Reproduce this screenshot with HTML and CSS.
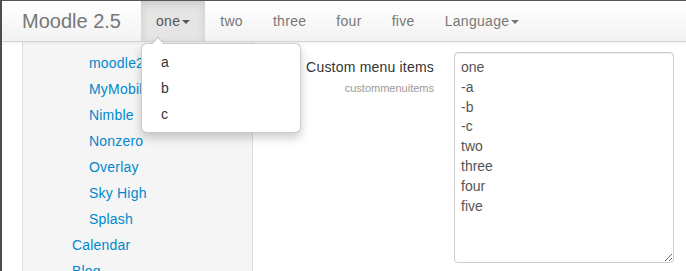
FILE: index.html
```html
<!DOCTYPE html>
<html lang="en">

<head>
  <meta charset="UTF-8" />
  <meta name="viewport" content="width=device-width, initial-scale=1.0" />
  <title>Moodle 2.5 - Custom menu items</title>
  <link rel="stylesheet" href="styles.css">
</head>

<body>
  <!-- Barra de navegación con el menú personalizado -->
  <header class="navbar">
    <a class="brand" href="#">Moodle 2.5</a>
    <ul class="nav">
      <li class="dropdown open">
        <a href="#">one<b class="caret"></b></a>
        <ul class="dropdown-menu">
          <li><a href="#">a</a></li>
          <li><a href="#">b</a></li>
          <li><a href="#">c</a></li>
        </ul>
      </li>
      <li><a href="#">two</a></li>
      <li><a href="#">three</a></li>
      <li><a href="#">four</a></li>
      <li><a href="#">five</a></li>
      <li class="dropdown"><a href="#">Language<b class="caret"></b></a></li>
    </ul>
  </header>

  <div class="page">
    <!-- Árbol de administración -->
    <aside class="sidebar">
      <ul class="tree">
        <li class="sub"><a href="#">moodle2</a></li>
        <li class="sub"><a href="#">MyMobile</a></li>
        <li class="sub"><a href="#">Nimble</a></li>
        <li class="sub"><a href="#">Nonzero</a></li>
        <li class="sub"><a href="#">Overlay</a></li>
        <li class="sub"><a href="#">Sky High</a></li>
        <li class="sub"><a href="#">Splash</a></li>
        <li><a href="#">Calendar</a></li>
        <li><a href="#">Blog</a></li>
      </ul>
    </aside>

    <main class="content">
      <div class="control-group">
        <label class="control-label" for="custommenuitems">
          Custom menu items
          <span class="setting-name">custommenuitems</span>
        </label>
        <textarea id="custommenuitems" class="setting-input">one
-a
-b
-c
two
three
four
five</textarea>
      </div>
    </main>
  </div>
</body>

</html>
```

FILE: styles.css
```css
html,
body {
  height: 100%;
}

body {
  font-family: "Liberation Sans", Arial, sans-serif;
  font-size: 14px;
  line-height: 20px;
  color: #333;
  background: #fff;
  margin: 0;
  border-top: 1px solid #555;
  border-left: 2px solid #4d4d4d;
  box-sizing: border-box;
  overflow: hidden;
}

a {
  text-decoration: none;
}

ul {
  list-style: none;
  margin: 0;
  padding: 0;
}

.navbar {
  position: relative;
  z-index: 10;
  display: flex;
  height: 40px;
  padding-left: 20px;
  background: linear-gradient(#ffffff, #f2f2f2);
  border-bottom: 1px solid #d4d4d4;
  box-shadow: 0 1px 4px rgba(0, 0, 0, 0.065);
}

.brand {
  display: block;
  padding: 10px 20px 10px 0;
  font-size: 20px;
  line-height: 20px;
  color: #777;
}

.nav {
  display: flex;
}

.nav > li {
  position: relative;
}

.nav > li > a {
  display: block;
  padding: 10px 15px;
  color: #777;
  letter-spacing: 0.3px;
}

.nav > li.open > a {
  background: #e5e5e5;
  color: #555;
  box-shadow: inset 0 3px 8px rgba(0, 0, 0, 0.125);
}

.caret {
  display: inline-block;
  width: 0;
  height: 0;
  margin-left: 2px;
  vertical-align: middle;
  border-top: 4px solid #777;
  border-left: 4px solid transparent;
  border-right: 4px solid transparent;
}

.open .caret {
  border-top-color: #555;
}

.dropdown-menu {
  display: none;
  position: absolute;
  top: 100%;
  left: 0;
  margin-top: 2px;
  width: 160px;
  box-sizing: border-box;
  padding: 5px 0;
  background: #fff;
  border: 1px solid rgba(0, 0, 0, 0.2);
  border-radius: 6px;
  box-shadow: 0 5px 10px rgba(0, 0, 0, 0.2);
  letter-spacing: 0;
}

.open .dropdown-menu {
  display: block;
}

.dropdown-menu:before,
.dropdown-menu:after {
  content: "";
  position: absolute;
  border-left: 7px solid transparent;
  border-right: 7px solid transparent;
  border-bottom: 7px solid rgba(0, 0, 0, 0.2);
  top: -7px;
  left: 9px;
}

.dropdown-menu:after {
  border-left-width: 6px;
  border-right-width: 6px;
  border-bottom: 6px solid #fff;
  top: -6px;
  left: 10px;
}

.dropdown-menu a {
  display: block;
  padding: 3px 19px;
  color: #333;
}

.page {
  display: flex;
  height: 100%;
  margin-left: 20px;
}

.sidebar {
  width: 229px;
  background: #f5f5f5;
  border-left: 1px solid #ddd;
  border-right: 1px solid #ddd;
}

.tree {
  padding: 8px 0 0 49px;
}

.tree li {
  line-height: 26px;
}

.tree li.sub {
  padding-left: 17px;
}

.tree a {
  color: #0088cc;
  letter-spacing: 0.2px;
}

.content {
  flex: 1;
  padding: 10px 0 0 21px;
}

.control-group {
  display: flex;
}

.control-label {
  width: 160px;
  margin-right: 20px;
  padding-top: 5px;
  text-align: right;
  letter-spacing: 0.2px;
}

.setting-name {
  display: block;
  margin-top: 1px;
  font-size: 11px;
  color: #999;
  letter-spacing: 0;
}

.setting-input {
  width: 220px;
  height: 211px;
  box-sizing: border-box;
  margin: 0;
  padding: 5px 6px;
  font-family: "Liberation Sans", Arial, sans-serif;
  font-size: 14px;
  line-height: 19.8px;
  color: #555;
  border: 1px solid #ccc;
  border-radius: 4px;
  box-shadow: inset 0 1px 1px rgba(0, 0, 0, 0.075);
}
```
